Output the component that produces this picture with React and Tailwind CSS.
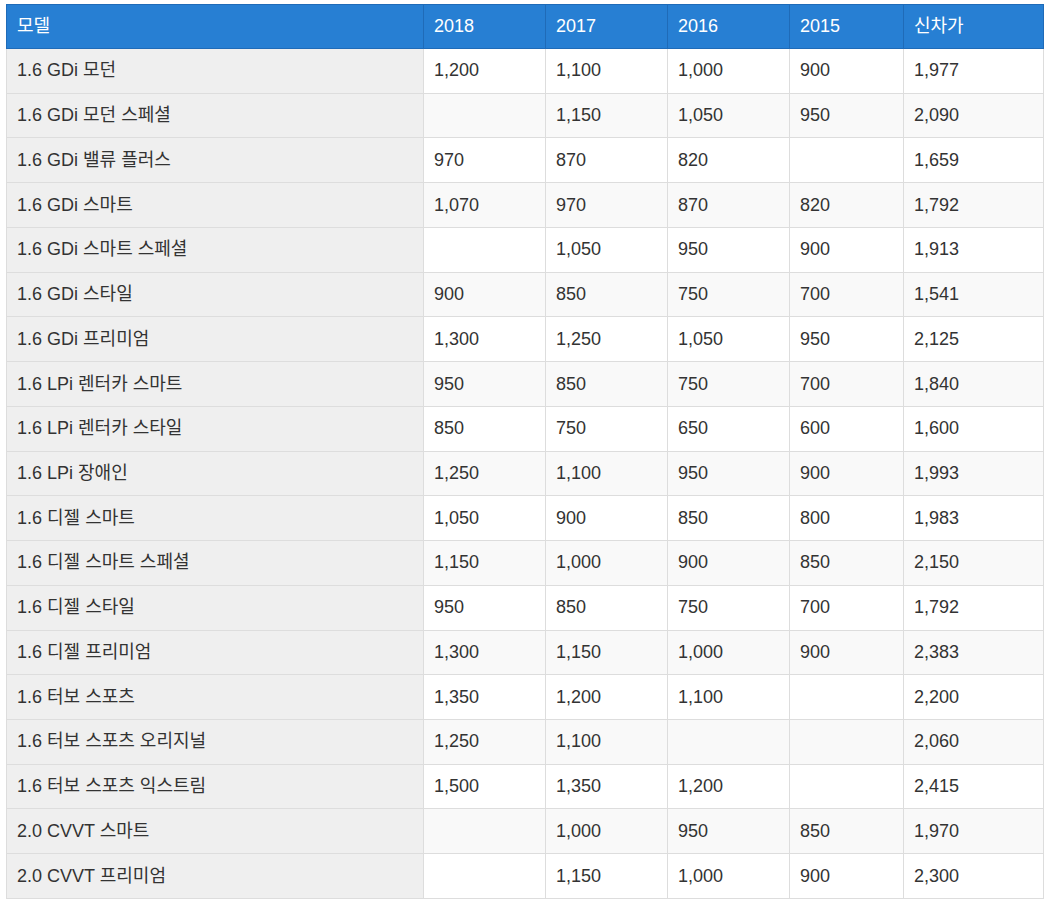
const rows = [
["1.6 GDi 모던","1,200","1,100","1,000","900","1,977"],
["1.6 GDi 모던 스페셜","","1,150","1,050","950","2,090"],
["1.6 GDi 밸류 플러스","970","870","820","","1,659"],
["1.6 GDi 스마트","1,070","970","870","820","1,792"],
["1.6 GDi 스마트 스페셜","","1,050","950","900","1,913"],
["1.6 GDi 스타일","900","850","750","700","1,541"],
["1.6 GDi 프리미엄","1,300","1,250","1,050","950","2,125"],
["1.6 LPi 렌터카 스마트","950","850","750","700","1,840"],
["1.6 LPi 렌터카 스타일","850","750","650","600","1,600"],
["1.6 LPi 장애인","1,250","1,100","950","900","1,993"],
["1.6 디젤 스마트","1,050","900","850","800","1,983"],
["1.6 디젤 스마트 스페셜","1,150","1,000","900","850","2,150"],
["1.6 디젤 스타일","950","850","750","700","1,792"],
["1.6 디젤 프리미엄","1,300","1,150","1,000","900","2,383"],
["1.6 터보 스포츠","1,350","1,200","1,100","","2,200"],
["1.6 터보 스포츠 오리지널","1,250","1,100","","","2,060"],
["1.6 터보 스포츠 익스트림","1,500","1,350","1,200","","2,415"],
["2.0 CVVT 스마트","","1,000","950","850","1,970"],
["2.0 CVVT 프리미엄","","1,150","1,000","900","2,300"],
];
const widths = ["w-[417px]","w-[122px]","w-[122px]","w-[122px]","w-[114px]","w-[140px]"];
export default function App() {
  return (
    <div className="bg-white w-[1046px] h-[904px] pt-[4px] pl-[6px]" style={{fontFamily:'"Liberation Sans","Noto Sans CJK KR",sans-serif'}}>
      <table className="border-collapse table-fixed w-[1037px] text-[18px] text-[#333]">
        <thead>
          <tr className="h-[44px] bg-[#277fd3] text-white">
            {["모델","2018","2017","2016","2015","신차가"].map((h,i)=>(
              <th key={i} className={`${widths[i]} border border-[#1f6bb8] text-left font-normal px-[10px]`}>{h}</th>
            ))}
          </tr>
        </thead>
        <tbody>
          {rows.map((r,ri)=>(
            <tr key={ri} className={`h-[44.74px] ${ri%2 ? "bg-[#f9f9f9]" : "bg-white"}`}>
              {r.map((c,ci)=>(
                <td key={ci} className={`border border-[#dddddd] px-[10px] ${ci===0 ? "bg-[#efefef]" : ""}`}>{c}</td>
              ))}
            </tr>
          ))}
        </tbody>
      </table>
    </div>
  );
}
